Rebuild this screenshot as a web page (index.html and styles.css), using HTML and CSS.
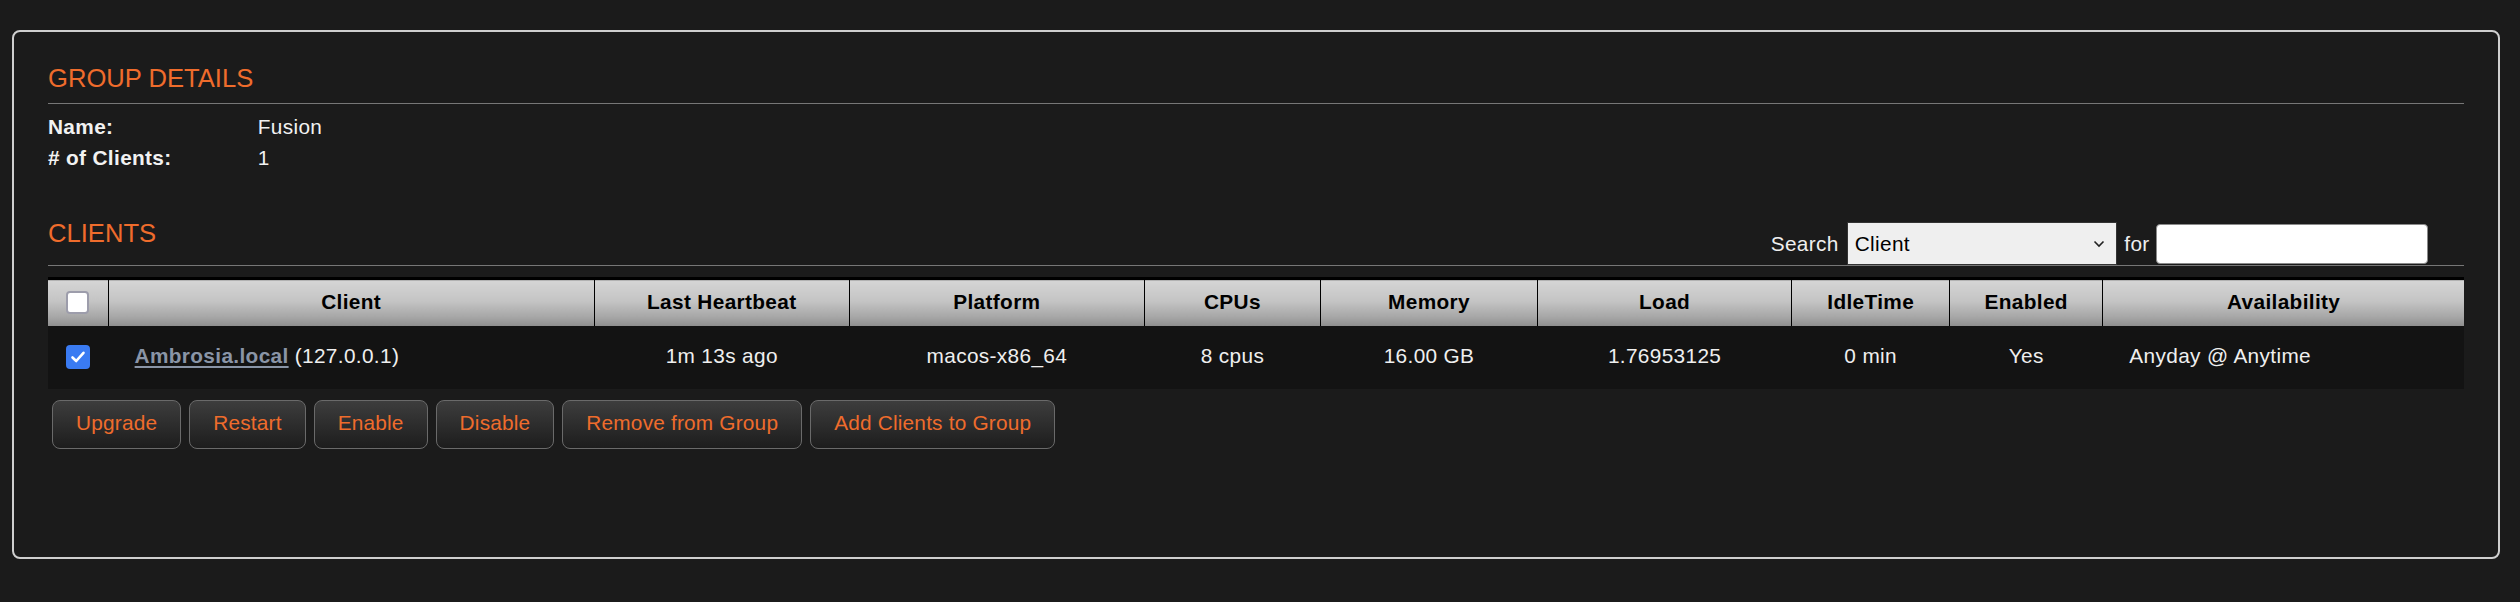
FILE: index.html
```html
<!DOCTYPE html>
<html lang="en">
<head>
<meta charset="utf-8">
<title>Group Details</title>
<link rel="stylesheet" href="styles.css">
</head>
<body>
<div class="card">
  <h2 class="section-title underlined">GROUP DETAILS</h2>
  <div class="details">
    <div class="label">Name:</div><div class="value">Fusion</div>
    <div class="label"># of Clients:</div><div class="value">1</div>
  </div>

  <div class="clients-head">
    <h2 class="section-title">CLIENTS</h2>
    <form class="search">
      <span class="search-label">Search</span>
      <div class="select"><span>Client</span><svg class="chev" width="12" height="8" viewBox="0 0 12 8"><polyline points="1.5,1.5 6,6 10.5,1.5" fill="none" stroke="#222" stroke-width="1.6"/></svg></div>
      <span class="for-label">for</span>
      <div class="text-input"></div>
    </form>
  </div>

  <table class="clients">
    <colgroup>
      <col class="c-check"><col class="c-client"><col class="c-hb"><col class="c-plat"><col class="c-cpu"><col class="c-mem"><col class="c-load"><col class="c-idle"><col class="c-en"><col class="c-av">
    </colgroup>
    <thead>
      <tr>
        <th><span class="cb"></span></th>
        <th>Client</th>
        <th>Last Heartbeat</th>
        <th>Platform</th>
        <th>CPUs</th>
        <th>Memory</th>
        <th>Load</th>
        <th>IdleTime</th>
        <th>Enabled</th>
        <th>Availability</th>
      </tr>
    </thead>
    <tbody>
      <tr>
        <td><span class="cb checked"><svg width="16" height="14" viewBox="0 0 16 14"><polyline points="2.5,7.5 6.2,11 13.5,2.8" fill="none" stroke="#fff" stroke-width="2.6" stroke-linecap="round" stroke-linejoin="round"/></svg></span></td>
        <td class="left"><a class="host" href="#">Ambrosia.local</a> (127.0.0.1)</td>
        <td>1m 13s ago</td>
        <td>macos-x86_64</td>
        <td>8 cpus</td>
        <td>16.00 GB</td>
        <td>1.76953125</td>
        <td>0 min</td>
        <td>Yes</td>
        <td class="left">Anyday @ Anytime</td>
      </tr>
    </tbody>
  </table>

  <div class="actions">
    <button class="btn">Upgrade</button>
    <button class="btn">Restart</button>
    <button class="btn">Enable</button>
    <button class="btn">Disable</button>
    <button class="btn">Remove from Group</button>
    <button class="btn">Add Clients to Group</button>
  </div>
</div>
</body>
</html>
```

FILE: styles.css
```css
html, body {
  background: #1b1b1b;
}
body {
  margin: 30px 20px 0 12px;
  font-family: "Liberation Sans", Arial, Helvetica, sans-serif;
  font-size: 20.8px;
  letter-spacing: 0.35px;
  color: #efefef;
}
.card {
  box-sizing: border-box;
  height: 529px;
  border: 2px solid #cfcfcf;
  border-radius: 8px;
  padding: 32px 34px;
}
.section-title {
  margin: 0;
  font-size: 25.6px;
  font-weight: normal;
  letter-spacing: 0;
  line-height: 29.4px;
  color: #ef6c2c;
}
.section-title.underlined {
  padding-bottom: 9.6px;
  border-bottom: 1px solid #777;
}
.details {
  display: grid;
  grid-template-columns: 209.7px auto;
  margin-top: 7.8px;
  line-height: 30.7px;
}
.details .label {
  font-weight: bold;
  color: #f2f2f2;
}
.details .value {
  color: #f2f2f2;
}
.clients-head {
  display: flex;
  justify-content: space-between;
  align-items: flex-start;
  margin-top: 45.5px;
  border-bottom: 1px solid #777;
}
.search {
  display: flex;
  align-items: center;
  margin: 3px 36px 0 0;
}
.search-label {
  margin-right: 8px;
}
.select {
  box-sizing: border-box;
  width: 270.6px;
  height: 43.6px;
  display: flex;
  align-items: center;
  justify-content: space-between;
  padding: 0 11px 0 7px;
  background: #efefef;
  border: 1px solid #333;
  color: #000;
}
.chev {
  display: block;
}
.for-label {
  margin: 0 6px 0 7px;
}
.text-input {
  box-sizing: border-box;
  width: 272.4px;
  height: 40px;
  background: #fff;
  border: 1px solid #8a8a8a;
  border-radius: 4px;
}
.clients {
  width: 100%;
  margin-top: 11px;
  border-collapse: collapse;
  table-layout: fixed;
  border-top: 3px solid #000;
}
.c-check { width: 60px; }
.c-client { width: 486px; }
.c-hb { width: 255px; }
.c-plat { width: 295px; }
.c-cpu { width: 176px; }
.c-mem { width: 217px; }
.c-load { width: 254px; }
.c-idle { width: 158px; }
.c-en { width: 153px; }
.c-av { width: 361px; }
.clients th {
  height: 42.7px;
  padding: 0 0 3px 0;
  font-weight: bold;
  color: #000;
  text-align: center;
  background: linear-gradient(#d5d5d5 0%, #c4c4c4 45%, #a6a6a6 80%, #8e8e8e 100%);
  border-left: 1px solid #000;
}
.clients th:first-child {
  border-left: none;
}
.clients td {
  height: 60.6px;
  padding: 0 0 2px 0;
  background: #131313;
  text-align: center;
  color: #efefef;
}
.clients td.left {
  text-align: left;
  padding-left: 26.6px;
}
.cb {
  box-sizing: border-box;
  display: inline-flex;
  align-items: center;
  justify-content: center;
  width: 23.4px;
  height: 23.4px;
  vertical-align: middle;
  background: #fff;
  border: 2.7px solid #9d9dab;
  border-radius: 4px;
}
.cb.checked {
  background: #3a7bf2;
  border: none;
  border-radius: 4px;
}
.cb svg {
  display: block;
}
.host {
  color: #8a95a7;
  font-weight: bold;
  text-decoration: underline;
  text-underline-offset: 3px;
}
.actions {
  display: flex;
  gap: 8px;
  margin-top: 11px;
  padding-left: 4px;
}
.btn {
  height: 49px;
  padding: 0 23px 2px;
  font-family: inherit;
  font-size: 20.8px;
  letter-spacing: 0.2px;
  color: #ef6c2c;
  background: linear-gradient(#3d3d3d, #1d1d1d);
  border: 1px solid #6a6a6a;
  border-radius: 8px;
}
```
